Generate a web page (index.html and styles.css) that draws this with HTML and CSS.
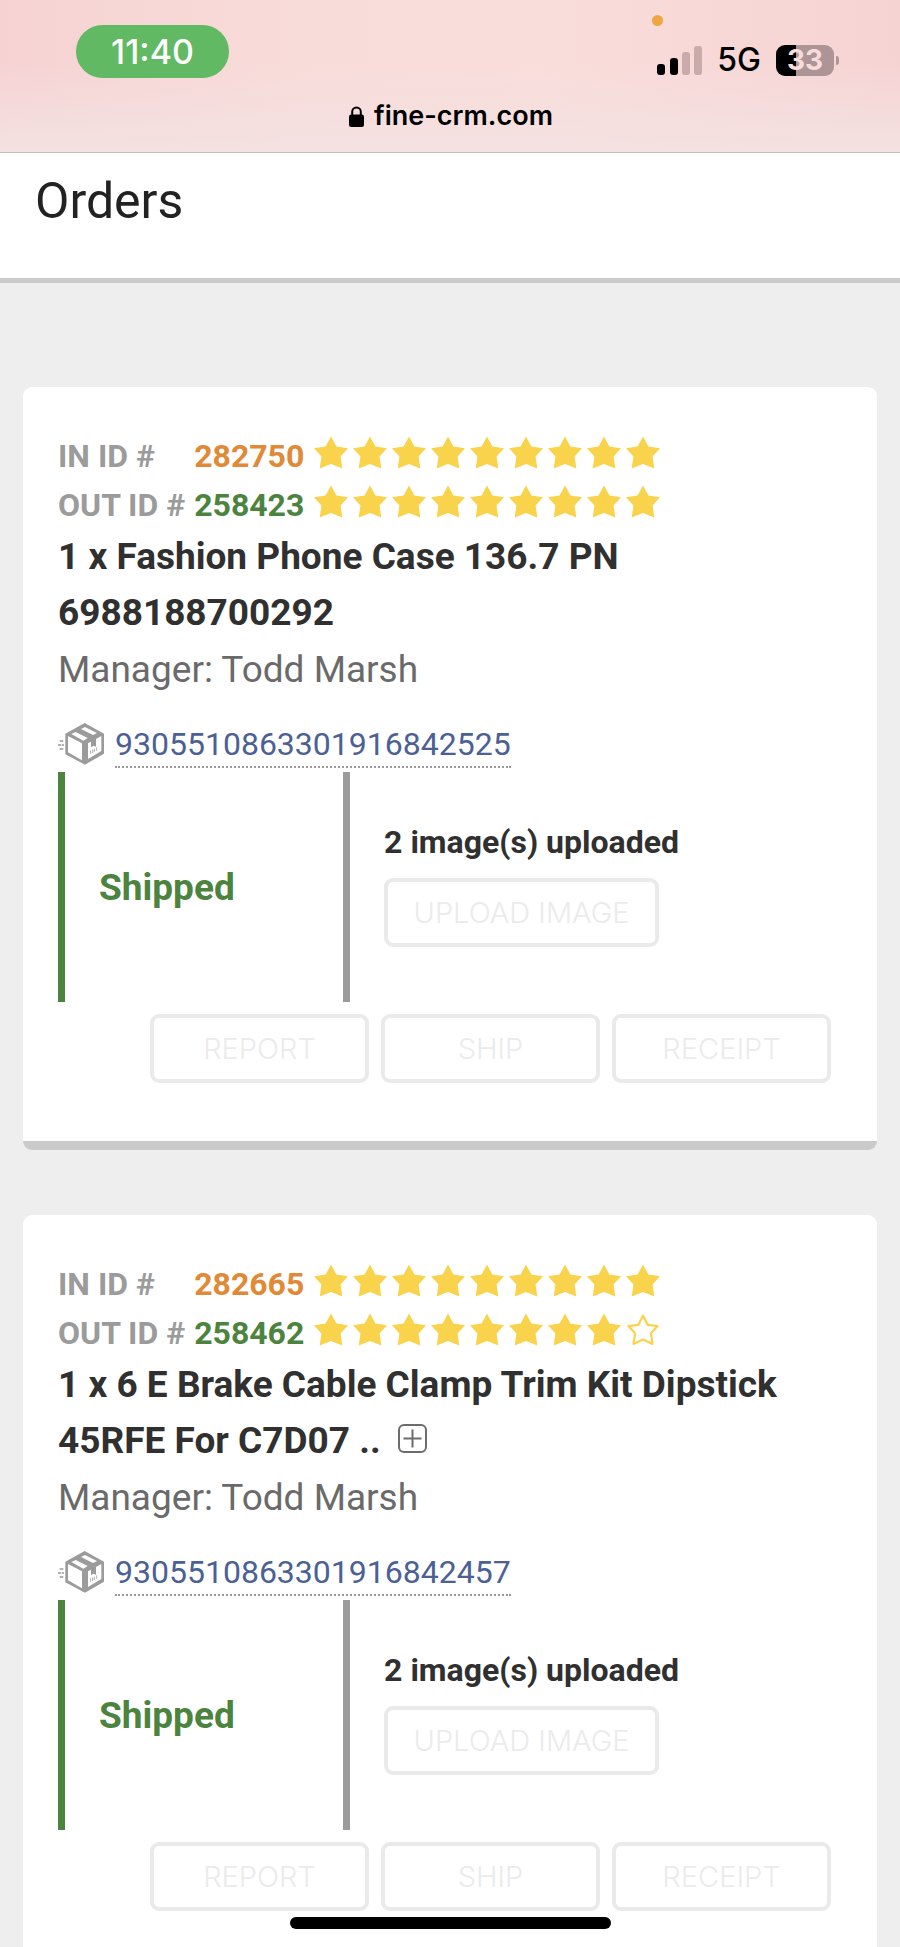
FILE: index.html
```html
<!DOCTYPE html>
<html lang="en">
<head>
<meta charset="utf-8">
<meta name="viewport" content="width=device-width, initial-scale=1">
<title>Orders</title>
<link rel="stylesheet" href="styles.css">
</head>
<body>
<svg class="sprite" aria-hidden="true">
  <symbol id="star" viewBox="0 0 34 33">
    <path d="M17 0.5 22.4 10.6 34 12.2 26.6 20.4 28.3 32.5 17 28 5.7 32.5 7.4 20.4 0 12.2 11.6 10.6Z" fill="currentColor"/>
  </symbol>
  <symbol id="star-empty" viewBox="0 0 34 33">
    <path d="M17 2.6 21.6 11.8 31.6 13.1 24.9 20.2 26.6 30.9 17 26.6 7.4 30.9 9.1 20.2 2.4 13.1 12.4 11.8Z" fill="none" stroke="currentColor" stroke-width="2.2" stroke-linejoin="round"/>
  </symbol>
  <symbol id="package" viewBox="0 0 138 126">
    <path d="M5 54h13M0 66h18M5 78h13" stroke="#9b9b9b" stroke-width="4" stroke-dasharray="10 2" fill="none"/>
    <path d="M80 0 138 32V92L81 125 22 94V32Z" fill="#9b9b9b"/>
    <path d="M30 39 72 61V112L30 88ZM90 61 99 56V73L106 68 114 71V48L130 39V84L90 108Z" fill="#fff"/>
    <path d="M40 33 53 27 89 45 76 53ZM69 18 81 12 117 30 105 36Z" fill="#fff"/>
    <path d="M98 82v11M104 79v11M109 77v10M116 73v10" stroke="#b0b0b0" stroke-width="3" fill="none"/>
  </symbol>
</svg>

<div class="screen">
  <div class="browser-bar">
    <span class="mic-dot"></span>
    <div class="status-row">
      <span class="clock">11:40</span>
      <div class="status-right">
        <svg class="signal" viewBox="0 0 45 29" aria-hidden="true">
          <rect x="0" y="18" width="8" height="11" rx="3"/>
          <rect x="13" y="12" width="8" height="17" rx="3"/>
          <rect x="25" y="6" width="8" height="23" rx="3" fill="#c9abac"/>
          <rect x="37" y="0" width="8" height="29" rx="3" fill="#c9abac"/>
        </svg>
        <span class="network">5G</span>
        <span class="battery">33</span>
      </div>
    </div>
    <div class="address">
      <svg class="lock" viewBox="0 0 15 21" aria-hidden="true">
        <path d="M3.2 10V5.8a4.3 4.3 0 0 1 8.6 0V10" fill="none" stroke="#000" stroke-width="2"/>
        <rect y="8.6" width="15" height="12.4" rx="2.2"/>
      </svg>
      <span>fine-crm.com</span>
    </div>
  </div>

  <header class="page-header"><h1 class="page-title">Orders</h1></header>

  <main class="orders">
    <article class="card">
      <div class="ids">
        <span class="id-label">IN ID #</span>
        <span class="id-in">282750</span>
        <span class="stars" role="img" aria-label="9 of 9 stars"><svg class="star"><use href="#star"/></svg><svg class="star"><use href="#star"/></svg><svg class="star"><use href="#star"/></svg><svg class="star"><use href="#star"/></svg><svg class="star"><use href="#star"/></svg><svg class="star"><use href="#star"/></svg><svg class="star"><use href="#star"/></svg><svg class="star"><use href="#star"/></svg><svg class="star"><use href="#star"/></svg></span>
        <span class="id-label">OUT ID #</span>
        <span class="id-out">258423</span>
        <span class="stars" role="img" aria-label="9 of 9 stars"><svg class="star"><use href="#star"/></svg><svg class="star"><use href="#star"/></svg><svg class="star"><use href="#star"/></svg><svg class="star"><use href="#star"/></svg><svg class="star"><use href="#star"/></svg><svg class="star"><use href="#star"/></svg><svg class="star"><use href="#star"/></svg><svg class="star"><use href="#star"/></svg><svg class="star"><use href="#star"/></svg></span>
      </div>
      <h2 class="product">1 x Fashion Phone Case 136.7 PN 6988188700292</h2>
      <p class="manager">Manager: Todd Marsh</p>
      <div class="tracking">
        <svg class="package" aria-hidden="true"><use href="#package"/></svg>
        <a class="tracking-link" href="#">9305510863301916842525</a>
      </div>
      <div class="state">
        <div class="state-name">Shipped</div>
        <div class="uploads">
          <p class="upload-count">2 image(s) uploaded</p>
          <button class="btn btn-upload" type="button">UPLOAD IMAGE</button>
        </div>
      </div>
      <div class="actions">
        <button class="btn" type="button">REPORT</button>
        <button class="btn" type="button">SHIP</button>
        <button class="btn" type="button">RECEIPT</button>
      </div>
    </article>

    <article class="card">
      <div class="ids">
        <span class="id-label">IN ID #</span>
        <span class="id-in">282665</span>
        <span class="stars" role="img" aria-label="9 of 9 stars"><svg class="star"><use href="#star"/></svg><svg class="star"><use href="#star"/></svg><svg class="star"><use href="#star"/></svg><svg class="star"><use href="#star"/></svg><svg class="star"><use href="#star"/></svg><svg class="star"><use href="#star"/></svg><svg class="star"><use href="#star"/></svg><svg class="star"><use href="#star"/></svg><svg class="star"><use href="#star"/></svg></span>
        <span class="id-label">OUT ID #</span>
        <span class="id-out">258462</span>
        <span class="stars" role="img" aria-label="8 of 9 stars"><svg class="star"><use href="#star"/></svg><svg class="star"><use href="#star"/></svg><svg class="star"><use href="#star"/></svg><svg class="star"><use href="#star"/></svg><svg class="star"><use href="#star"/></svg><svg class="star"><use href="#star"/></svg><svg class="star"><use href="#star"/></svg><svg class="star"><use href="#star"/></svg><svg class="star"><use href="#star-empty"/></svg></span>
      </div>
      <h2 class="product">1 x 6 E Brake Cable Clamp Trim Kit Dipstick 45RFE For C7D07 ..<button class="expand" type="button" aria-label="Show full title"><svg class="expand-icon" viewBox="0 0 29 29" aria-hidden="true"><rect x="1" y="1" width="27" height="27" rx="5"/><path d="M5.5 14.5h18M14.5 5.500v18"/></svg></button></h2>
      <p class="manager">Manager: Todd Marsh</p>
      <div class="tracking">
        <svg class="package" aria-hidden="true"><use href="#package"/></svg>
        <a class="tracking-link" href="#">9305510863301916842457</a>
      </div>
      <div class="state">
        <div class="state-name">Shipped</div>
        <div class="uploads">
          <p class="upload-count">2 image(s) uploaded</p>
          <button class="btn btn-upload" type="button">UPLOAD IMAGE</button>
        </div>
      </div>
      <div class="actions">
        <button class="btn" type="button">REPORT</button>
        <button class="btn" type="button">SHIP</button>
        <button class="btn" type="button">RECEIPT</button>
      </div>
    </article>
  </main>
  <div class="home-indicator"></div>
</div>
</body>
</html>
```

FILE: styles.css
```css
* {
  box-sizing: border-box;
}

body {
  margin: 0;
  background: #eee;
  color: #303030;
  font-family: Roboto, "Liberation Sans", sans-serif;
}

h1,
h2,
p {
  margin: 0;
}

.sprite {
  position: absolute;
  width: 0;
  height: 0;
}

.screen {
  position: relative;
  height: 100vh;
  overflow: hidden auto;
  scrollbar-width: none;
}

/* Phone status bar and address */
.browser-bar {
  position: relative;
  padding: 25px 66px 18px 76px;
  border-bottom: 1px solid #c6b9ba;
  background:
    linear-gradient(to bottom, transparent 40%, #f4e1e1 100%),
    linear-gradient(to right, #f6d2d3, #f8dcda 35%, #f9dddb 60%, #f6d3d3);
  color: #000;
  font-family: Inter, "Liberation Sans", sans-serif;
}

.mic-dot {
  position: absolute;
  top: 15px;
  left: 73%;
  width: 11px;
  height: 11px;
  margin-left: -5px;
  border-radius: 50%;
  background: #eea743;
}

.status-row {
  display: flex;
  justify-content: space-between;
  align-items: center;
}

.clock {
  width: 153px;
  border-radius: 27px;
  background: #61b963;
  color: #fff;
  font-size: 34px;
  font-weight: 500;
  line-height: 53px;
  text-align: center;
}

.status-right {
  display: flex;
  align-items: center;
  padding-top: 17px;
}

.signal {
  width: 45px;
  height: 29px;
}

.network {
  margin: 0 15px;
  font-size: 32px;
  font-weight: 500;
  line-height: 32px;
}

.battery {
  position: relative;
  width: 58px;
  border-radius: 9px;
  background: linear-gradient(to right, #000 20px, #ad9596 20px);
  color: #f8dcdc;
  font-size: 28px;
  font-weight: 700;
  line-height: 31px;
  text-align: center;
}

.battery::after {
  content: "";
  position: absolute;
  top: 11px;
  right: -5px;
  width: 3px;
  height: 9px;
  border-radius: 0 4px 4px 0;
  background: #ad9596;
}

.address {
  display: flex;
  justify-content: center;
  align-items: center;
  gap: 10px;
  margin-top: 20px;
  padding-right: 8px;
  font-size: 27px;
  font-weight: 600;
  line-height: 36px;
}

.lock {
  width: 15px;
  height: 21px;
}

/* Page header */
.page-header {
  padding: 18px 35px 47px;
  border-bottom: 5px solid #cacaca;
  background: #fff;
}

.page-title {
  color: #222;
  font-size: 50px;
  font-weight: 400;
  line-height: 60px;
}

/* Order cards */
.orders {
  display: flex;
  flex-direction: column;
  gap: 65px;
  padding: 104px 23px 65px;
}

.card {
  padding: 45px 35px 58px;
  border-bottom: 9px solid #cacaca;
  border-radius: 9px;
  background: #fff;
}

.ids {
  display: grid;
  grid-template-columns: auto auto 1fr;
  gap: 1px 9px;
  font-size: 32px;
  font-weight: 700;
  line-height: 48px;
}

.id-label {
  color: #9b9b9b;
}

.id-in {
  color: #e08937;
}

.id-out {
  color: #4c843f;
}

.stars {
  display: flex;
  gap: 5px;
  padding: 4px 0 0 1px;
  color: #f9d34c;
}

.star {
  width: 34px;
  height: 33px;
}

.product {
  font-size: 37px;
  font-weight: 700;
  line-height: 56px;
}

.expand {
  margin: 0 0 0 17px;
  padding: 0;
  border: 0;
  background: none;
  line-height: 29px;
}

.expand-icon {
  display: block;
  width: 29px;
  height: 29px;
  fill: none;
  stroke: #6c6c6c;
  stroke-width: 2;
}

.manager {
  margin-top: 1px;
  color: #6a6a6a;
  font-size: 37px;
  line-height: 56px;
}

.tracking {
  display: flex;
  align-items: flex-start;
  gap: 11px;
  margin-top: 25px;
}

.package {
  width: 46px;
  height: 42px;
}

.tracking-link {
  border-bottom: 2px dotted #999;
  color: #4b6095;
  font-size: 32px;
  line-height: 43px;
  text-decoration: none;
}

.state {
  display: grid;
  grid-template-columns: 4fr 7fr;
  margin-top: 4px;
}

.state-name {
  display: flex;
  align-items: center;
  padding-left: 34px;
  border-left: 7px solid #4c843f;
  color: #4c843f;
  font-size: 37px;
  font-weight: 700;
}

.uploads {
  display: flex;
  flex-direction: column;
  align-items: flex-start;
  gap: 17px;
  padding: 51px 34px 55px;
  border-left: 7px solid #9b9b9b;
}

.upload-count {
  font-size: 32px;
  font-weight: 700;
  line-height: 38px;
}

.actions {
  display: flex;
  justify-content: flex-end;
  gap: 12px;
  margin-top: 12px;
  padding-right: 11px;
}

.btn {
  width: 219px;
  padding: 14px 0;
  border: 4px solid #eaeaea;
  border-radius: 9px;
  background: #fff;
  color: #ebebeb;
  font-family: Inter, "Liberation Sans", sans-serif;
  font-size: 29px;
  font-weight: 300;
  line-height: 33px;
}

.btn-upload {
  width: 275px;
}

.home-indicator {
  position: fixed;
  bottom: 18px;
  left: 50%;
  width: 321px;
  height: 12px;
  margin-left: -160px;
  border-radius: 6px;
  background: #000;
}
```
